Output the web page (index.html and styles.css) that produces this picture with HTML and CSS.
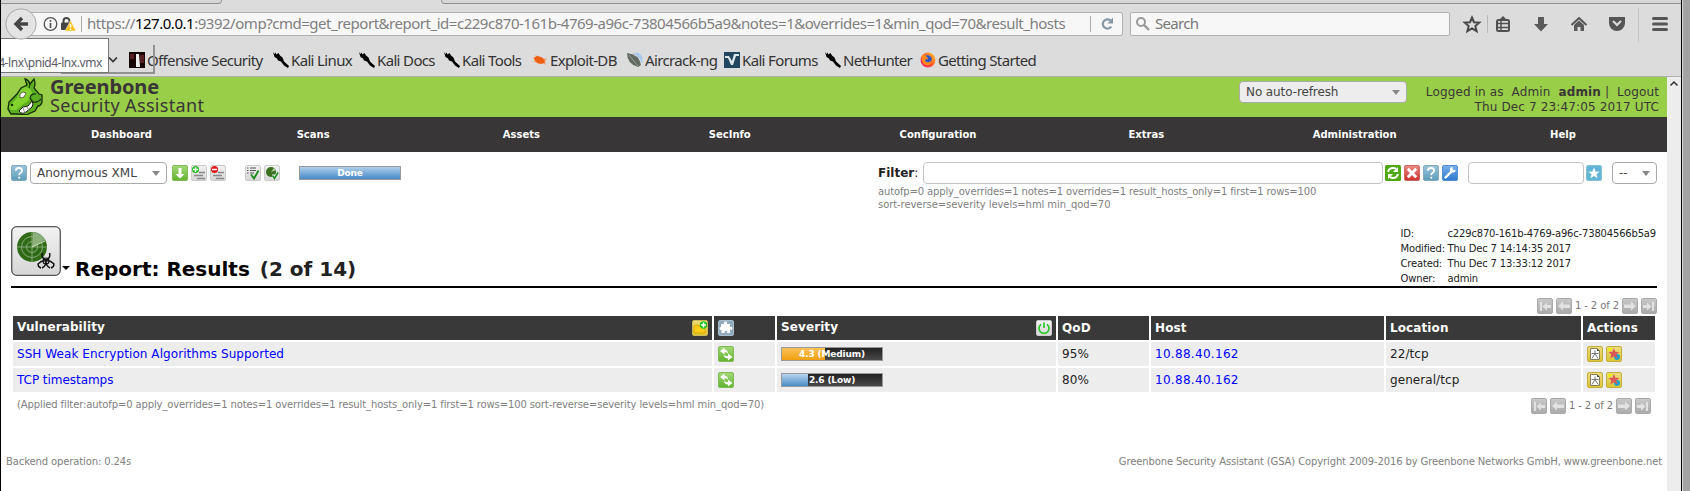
FILE: index.html
```
<!DOCTYPE html>
<html lang="en">
<head>
<meta charset="utf-8">
<title>Greenbone Security Assistant</title>
<link rel="stylesheet" href="styles.css">
</head>
<body>
<svg width="0" height="0" class="defs">
  <defs>
    <linearGradient id="gBlue" x2="0" y2="1"><stop offset="0" stop-color="#9cc6dc"/><stop offset="1" stop-color="#5c9bbb"/></linearGradient>
    <linearGradient id="gGreen" x2="0" y2="1"><stop offset="0" stop-color="#a3d977"/><stop offset="1" stop-color="#62b22f"/></linearGradient>
    <linearGradient id="gGray" x2="0" y2="1"><stop offset="0" stop-color="#f2f2f2"/><stop offset="1" stop-color="#d6d6d6"/></linearGradient>
    <linearGradient id="gPage" x2="0" y2="1"><stop offset="0" stop-color="#c9c9c9"/><stop offset="1" stop-color="#aaa"/></linearGradient>
    <linearGradient id="gRed" x2="0" y2="1"><stop offset="0" stop-color="#ec8a83"/><stop offset="1" stop-color="#c9302f"/></linearGradient>
    <linearGradient id="gWrench" x2="0" y2="1"><stop offset="0" stop-color="#7ab2e8"/><stop offset="1" stop-color="#2d78cf"/></linearGradient>
    <linearGradient id="gGold" x2="0" y2="1"><stop offset="0" stop-color="#eedc80"/><stop offset="1" stop-color="#dcc52f"/></linearGradient>
    <linearGradient id="gFox" x1="0" y1="1" x2="1" y2="0"><stop offset="0" stop-color="#f0147a"/><stop offset=".5" stop-color="#ff5a2a"/><stop offset="1" stop-color="#ffd52e"/></linearGradient>
    <symbol id="help" viewBox="0 0 16 16"><rect x=".5" y=".5" width="15" height="15" rx="1.5" fill="url(#gBlue)" stroke="#86aabd"/><path d="M4.8 5.6Q5 3 8 3t3.1 2.5Q11 7 9.400 8 8.200 8.700 8.200 10.300M8.200 11.700v1.800" fill="none" stroke="#fff" stroke-width="1.800"/></symbol>
    <symbol id="kali" viewBox="0 0 16 16"><path d="M0 0l1.500 2 1-1.500 1 2L5.500 1 7 3.500l2.500 2 1.500 4L16 14l-1 2-4-2.500-3-4L5 8.500 4 6.500 1.500 5z" fill="#000"/></symbol>
    <symbol id="first" viewBox="0 0 16 16"><rect x=".5" y=".5" width="15" height="15" rx="1.500" fill="url(#gPage)" stroke="#aaa"/><path d="M3 4h2v9H3zM5.500 8.500l4.500-4v2.500h4v3h-4v2.500z" fill="#e2e2e2"/></symbol>
    <symbol id="prev" viewBox="0 0 16 16"><rect x=".5" y=".5" width="15" height="15" rx="1.500" fill="url(#gPage)" stroke="#aaa"/><path d="M2 8l5-4.500V6.500h7v3.500H7v2.500z" fill="#e2e2e2"/></symbol>
    <symbol id="compare" viewBox="0 0 16 16"><rect x=".5" y=".5" width="15" height="15" rx="1.500" fill="url(#gGreen)" stroke="#80bb58"/><path d="M2 5l4.500-3.500v2Q10 4 10 7.500 9 6 6.500 6.300v2.200zM14.500 11L10 14.500v-2Q6 12.500 6 8.500q1 2 4 1.500V7.500z" fill="#fff"/></symbol>
    <symbol id="note" viewBox="0 0 16 16"><rect x=".5" y=".5" width="15" height="15" rx="1.500" fill="url(#gGold)" stroke="#c2ae3c"/><path d="M3.500 2.500h6.500l2.500 2.500v8.500h-9z" fill="#fff" stroke="#85805c"/><path d="M10 2.500V5h2.500z" fill="#444"/><path d="M8 4.500v3M4.500 7.500h7M8 7.500l-3 5M8 7.500l3 5" stroke="#777" fill="none"/></symbol>
    <symbol id="override" viewBox="0 0 16 16"><rect x=".5" y=".5" width="15" height="15" rx="1.500" fill="url(#gGold)" stroke="#c2ae3c"/><path d="M2 2h5l-4 4z" fill="#e8f000"/><circle cx="11" cy="11" r="3" fill="#18a4cf"/><path d="M7.800 2l1.500 3.800 4 .2-3 2.500 1.200 4-3.700-2.200-3.500 2.200 1-4L2.500 6l4-.2z" fill="#dc5757"/></symbol>
  </defs>
</svg>
<div class="window">
  <div class="chrome">
    <div class="tabs"><span class="tab-a"></span><span class="tab-b"></span></div>
    <div class="navbar">
      <span class="back"><svg width="32" height="32" viewBox="0 0 32 32"><circle cx="16" cy="16" r="15.200" fill="#e4e4e4" stroke="#aaa"/><path d="M17 10l-6 6 6 6M11.500 16H23" fill="none" stroke="#454545" stroke-width="3.400"/></svg></span>
      <div class="url">
        <svg class="info" width="34" height="16" viewBox="0 0 34 16"><circle cx="7.500" cy="8" r="6.300" fill="none" stroke="#555" stroke-width="1.300"/><path d="M7.500 7v5M7.500 4v1.700" stroke="#555" stroke-width="1.700"/><path d="M20.500 8V5a3 3 0 0 1 6 0V8" fill="none" stroke="#444" stroke-width="2"/><rect x="18" y="6.500" width="10" height="7.500" rx="1" fill="#444"/><path d="M27.500 4.500L33 15H22z" fill="#ffc119" stroke="#f6f6f6" stroke-width=".5"/><path d="M27.500 8v3.500M27.500 12.500V14" stroke="#fff" stroke-width="1.500"/></svg>
        <span class="sep"></span>
        <span class="address">https://<b>127.0.0.1</b>:9392/omp?cmd=get_report&amp;report_id=c229c870-161b-4769-a96c-73804566b5a9&amp;notes=1&amp;overrides=1&amp;min_qod=70&amp;result_hosts</span>
        <span class="sep reload-sep"></span>
        <svg width="13" height="14" viewBox="0 0 13 14"><path d="M9.500 3.500A4.600 4.600 0 1 0 10.300 9.500" fill="none" stroke="#8797a5" stroke-width="2.200"/><path d="M12 .5v6H6.500z" fill="#8797a5"/></svg>
      </div>
      <div class="search"><svg width="14" height="14" viewBox="0 0 14 14"><circle cx="5" cy="5" r="4" fill="none" stroke="#999" stroke-width="2"/><path d="M8 8l5 5" stroke="#999" stroke-width="2.400"/></svg><span>Search</span></div>
      <svg class="tools" width="215" height="36" viewBox="0 0 215 36">
        <path d="M12 11.500l2 4.700 5.300.4-4 3.500 1.300 5L12 22.300l-4.600 2.800 1.300-5-4-3.500 5.300-.4z" fill="none" stroke="#484848" stroke-width="2"/>
        <path d="M27.500 9v18" stroke="#b8b8b8"/>
        <rect x="37" y="14" width="12" height="11" rx="1.500" fill="none" stroke="#505050" stroke-width="2"/><path d="M39 14l4-4 4 4z" fill="#505050"/><path d="M38 17.500h10M38 21.500h10M41 15v10" stroke="#505050" stroke-width="1.500"/>
        <path d="M78 11h6v7h4l-7 7.500-7-7.500h4z" fill="#5a5a5a"/>
        <path d="M111.500 19l7.500-7 7.500 7" fill="none" stroke="#555" stroke-width="2"/><path d="M114 19l5-4.500 5 4.500v6h-3.500v-4h-3v4H114z" fill="#5a5a5a"/>
        <path d="M149 11h16v6a8 8 0 0 1-16 0z" fill="#555"/><path d="M153 15l4 4 4-4" fill="none" stroke="#ddd" stroke-width="2"/>
        <path d="M178.500 2v34" stroke="#c4c4c4"/>
        <path d="M193.500 12.500h13M193.500 18h13M193.500 23.500h13" stroke="#555" stroke-width="3" stroke-linecap="round"/>
      </svg>
    </div>
    <div class="bookmarks">
      <span><svg width="16" height="16" viewBox="0 0 16 16"><path d="M0 0h16v16H0z" fill="#180505"/><path d="M1 2h4v5H1zM11 3h4v8h-4z" fill="#592024"/><path d="M7 2h3l1 13H7z" fill="#eee"/></svg>Offensive Security</span>
      <span><svg width="16" height="16"><use href="#kali"/></svg>Kali Linux</span>
      <span><svg width="16" height="16"><use href="#kali"/></svg>Kali Docs</span>
      <span><svg width="16" height="16"><use href="#kali"/></svg>Kali Tools</span>
      <span><svg width="16" height="16" viewBox="0 0 16 16"><path d="M1 5l4 1L3 3l5 2 4 2 3-1-2 3 1 4-3-2-4 1-4-2-3 0 3-1z" fill="#f09a6a"/><ellipse cx="7.500" cy="8" rx="5.500" ry="3.200" transform="rotate(25 7.500 8)" fill="#ef5f10"/></svg>Exploit-DB</span>
      <span><svg width="16" height="16" viewBox="0 0 16 16"><path d="M6 1.500Q14 3 15 11M9 1q5 1 6 6" fill="none" stroke="#a6c7ee" stroke-width="1.600"/><path d="M0 1Q12 2 14 13L11 15Q0 12 0 1z" fill="#626b62"/><path d="M2 3l9 11" stroke="#999" /></svg>Aircrack-ng</span>
      <span><svg width="16" height="16" viewBox="0 0 16 16"><path d="M0 0h16v16H0z" fill="#20475e"/><path d="M1 4h4l3 5 2-7h5v2h-3l-3 9H7L4 6H1z" fill="#dce5e8"/></svg>Kali Forums</span>
      <span><svg width="16" height="16"><use href="#kali"/></svg>NetHunter</span>
      <span><svg width="16" height="16" viewBox="0 0 16 16"><circle cx="8" cy="8" r="7.500" fill="url(#gFox)"/><circle cx="7.500" cy="7.500" r="4.200" fill="#2b57c5"/><path d="M2 3q5 0 6 4-3 0-3 2 4 3 7-1-1 6-6 5Q1 12 2 3z" fill="#ff8b16"/></svg>Getting Started</span>
    </div>
    <div class="tip-shadow"></div>
    <div class="tip">4-lnx\pnid4-lnx.vmx</div>
    <svg class="chev" width="10" height="8" viewBox="0 0 10 8"><path d="M1 1.500l4 4 4-4" fill="none" stroke="#333" stroke-width="1.700"/></svg>
  </div>
  <div class="view">
    <div class="page">
      <header class="banner">
        <svg class="logo" width="36" height="38" viewBox="0 0 36 38"><path d="M20 8l-2-6q4 1 5 5l4-5q2 5 0 9l5 6 3 1v7q-1 4-4 4l-3 5-9 4-8-1-7 0-3-5 1-7 8-8 4-6z" fill="#5cae20" stroke="#142b08" stroke-width="1.300"/><path d="M18 10q8 1 7 9l-4 5-6 4-6 5-5 0-2-4 8-8q2-8 8-11z" fill="#82d22e"/><path d="M13 17l3-2 3 1-2 4-4 1z" fill="#fff" stroke="#222" stroke-width=".6"/><path d="M12 34l4-4 5-1 4-5q2 3 0 6l-6 5q-4 3-7-1z" fill="#fff" stroke="#1a1a1a"/><path d="M16 31l2 5M20 30l2 4" stroke="#777" stroke-width=".8"/><path d="M29 17q-5-1-6 4l3 4q5 1 8-3" fill="#5cae20" stroke="#14300a" stroke-width="1.200"/><path d="M22 5q2 3 0 6" fill="none" stroke="#14300a"/><circle cx="5" cy="28" r="1.300" fill="#173007"/></svg>
        <div class="brand"><strong>Greenbone</strong><span>Security Assistant</span></div>
        <div class="select refresh"><span>No auto-refresh</span><i></i></div>
        <div class="session"><div>Logged in as&nbsp; Admin&nbsp; <b>admin</b> |&nbsp; Logout</div><div>Thu Dec 7 23:47:05 2017 UTC</div></div>
      </header>
      <nav><a>Dashboard</a><a>Scans</a><a>Assets</a><a>SecInfo</a><a>Configuration</a><a>Extras</a><a>Administration</a><a>Help</a></nav>
      <div class="toolbar">
        <svg class="ic" width="16" height="16"><use href="#help"/></svg>
        <div class="select format"><span>Anonymous XML</span><i></i></div>
        <svg class="ic" width="16" height="16" viewBox="0 0 16 16"><rect x=".5" y=".5" width="15" height="15" rx="1.500" fill="url(#gGreen)" stroke="#80bb58"/><path d="M6.500 3h3v6h3L8 13.500 3.500 9h3z" fill="#fff"/></svg>
        <svg class="ic" width="16" height="16" viewBox="0 0 16 16"><rect x=".5" y=".5" width="15" height="15" rx="1.500" fill="url(#gGray)" stroke="#ccc"/><path d="M8 7.500h6M3 10.500h9M6 13.500h8" stroke="#888" stroke-width="1.400"/><circle cx="4.500" cy="4.500" r="3.500" fill="#1dbb1d"/><path d="M4.500 2v5M2 4.500h5" stroke="#fff" stroke-width="1.400"/></svg>
        <svg class="ic" width="16" height="16" viewBox="0 0 16 16"><rect x=".5" y=".5" width="15" height="15" rx="1.500" fill="url(#gGray)" stroke="#ccc"/><path d="M8 7.500h6M3 10.500h9M6 13.500h8" stroke="#888" stroke-width="1.400"/><circle cx="4.500" cy="4.500" r="3.500" fill="#e31616"/><path d="M2 4.500h5" stroke="#fff" stroke-width="1.500"/></svg>
        <svg class="ic gap" width="16" height="16" viewBox="0 0 16 16"><rect x=".5" y=".5" width="15" height="15" rx="1.500" fill="url(#gGray)" stroke="#ccc"/><path d="M2 3h1.500M5 3h6M2 5.500h1.500M5 5.500h6M2 8h1.500M5 8h4" stroke="#555" stroke-width="1.200"/><path d="M6 9.500l3 4 4.500-8" fill="none" stroke="#178a17" stroke-width="1.800"/></svg>
        <svg class="ic" width="16" height="16" viewBox="0 0 16 16"><rect x=".5" y=".5" width="15" height="15" rx="1.500" fill="url(#gGray)" stroke="#ccc"/><circle cx="7" cy="7" r="5" fill="#3a7020"/><path d="M7 7l5-2-2-2z" fill="#b9d3ac"/><path d="M8 9.500h5.500v4H8z" fill="#eee"/><path d="M8.500 10.500l2 3 3.500-6" fill="none" stroke="#178a17" stroke-width="1.500"/></svg>
        <div class="bar done"><b>Done</b></div>
        <div class="filter">
          <div class="frow"><span class="flabel"><b>Filter</b>:</span><span class="input main"></span>
            <svg class="ic" width="16" height="16" viewBox="0 0 16 16"><rect width="16" height="16" rx="1.500" fill="#51a817"/><path d="M3 7q1-4 5-4 2 0 3 1M13 9q-1 4-5 4-2 0-3-1" fill="none" stroke="#fff" stroke-width="2"/><path d="M13 2v5H8zM3 14V9h5z" fill="#fff"/></svg>
            <svg class="ic" width="16" height="16" viewBox="0 0 16 16"><rect x=".5" y=".5" width="15" height="15" rx="1.500" fill="url(#gRed)" stroke="#ce6661"/><path d="M3.800 3.800l8.400 8.400M12.200 3.800l-8.400 8.400" stroke="#fff" stroke-width="3"/></svg>
            <svg class="ic" width="16" height="16"><use href="#help"/></svg>
            <svg class="ic" width="16" height="16" viewBox="0 0 16 16"><rect x=".5" y=".5" width="15" height="15" rx="1.500" fill="url(#gWrench)" stroke="#4f8fd3"/><path d="M3.500 12.500l7-7" stroke="#fff" stroke-width="2.400" stroke-linecap="round"/><path d="M13.500 4.500a2.800 2.800 0 1 1-3-2.500v2.500l1 1z" fill="#fff"/></svg>
            <span class="input name"></span>
            <svg class="ic" width="16" height="16" viewBox="0 0 16 16"><rect x=".5" y=".5" width="15" height="15" rx="1.500" fill="#61b5d6" stroke="#8bc0d4"/><path d="M8 2.500l1.600 3.900 4 .3-3.100 2.500 1 4L8 11l-3.500 2.200 1-4L2.400 6.700l4-.3z" fill="#fff"/></svg>
            <div class="select pick"><span>--</span><i></i></div>
          </div>
          <div class="applied">autofp=0 apply_overrides=1 notes=1 overrides=1 result_hosts_only=1 first=1 rows=100<br><span>sort-reverse=severity levels=hml min_qod=70</span></div>
        </div>
      </div>
      <div class="heading">
        <svg class="report" width="50" height="50" viewBox="0 0 50 50"><rect x=".7" y=".7" width="48.600" height="48.600" rx="5" fill="url(#gGray)" stroke="#555" stroke-width="1.300"/><circle cx="21" cy="21" r="15" fill="#2f6b17"/><path d="M21 21L34 14Q30 7 22 6z" fill="#a9c69c" opacity=".75"/><g fill="none" stroke="#8fb080" stroke-width=".9"><circle cx="21" cy="21" r="10.500"/><circle cx="21" cy="21" r="5.500"/><path d="M6 21h30M21 6v30"/><path d="M21 21l13-6" stroke="#e4f0de"/></g><g fill="none" stroke="#111"><circle cx="35" cy="35" r="3" stroke-width="1.100"/><path d="M35 34q-5-2-3.500-7M35 34q5-2 3.500-7M35 35q-4-1-8 3 0 3 3 4M35 35q4-1 8 3 0 3-3 4M35 35q0 5-4 7M35 35q0 5 4 7" stroke-width="1.400"/></g></svg>
        <i class="caret"></i>
        <h1>Report: Results <span>(2 of 14)</span></h1>
        <dl><dt>ID:</dt><dd>c229c870-161b-4769-a96c-73804566b5a9</dd><dt>Modified:</dt><dd>Thu Dec 7 14:14:35 2017</dd><dt>Created:</dt><dd>Thu Dec 7 13:33:12 2017</dd><dt>Owner:</dt><dd>admin</dd></dl>
      </div>
      <div class="pager"><svg width="16" height="16"><use href="#first"/></svg><svg width="16" height="16"><use href="#prev"/></svg><span>1 - 2 of 2</span><svg class="flip" width="16" height="16"><use href="#prev"/></svg><svg class="flip" width="16" height="16"><use href="#first"/></svg></div>
      <table>
        <colgroup><col class="c1"><col class="c2"><col class="c3"><col class="c4"><col class="c5"><col class="c6"><col class="c7"></colgroup>
        <tr><th><div>Vulnerability<svg width="16" height="16" viewBox="0 0 16 16"><rect x=".5" y=".5" width="15" height="15" rx="1.500" fill="url(#gGold)" stroke="#cbb85a"/><path d="M2 13V6l1-1h3l1 1h6v7z" fill="#ffcf1a" stroke="#e0a800"/><circle cx="11.500" cy="5" r="3.700" fill="#1fc01f"/><path d="M11.500 2.500v5M9 5h5" stroke="#fff" stroke-width="1.500"/></svg></div></th>
          <th><svg width="16" height="16" viewBox="0 0 16 16"><rect x=".5" y=".5" width="15" height="15" rx="1.500" fill="#8fa9bd" stroke="#a9bccb"/><path d="M3 4h3.200Q5 1.500 7.500 1.500T8.800 4H12v3q2.500-1 2.500 1.300T12 9.500V13H9q.8-2.300-1-2.300T7 13H3.500V9.800Q1.500 10.500 1.500 8.500T3 7z" fill="#fff"/></svg></th>
          <th><div>Severity<svg width="16" height="16" viewBox="0 0 16 16"><rect x=".5" y=".5" width="15" height="15" rx="1.500" fill="url(#gGray)" stroke="#ccc"/><path d="M5 4.300a5 5 0 1 0 6 0M8 2.500V8" fill="none" stroke="#20c720" stroke-width="1.600"/></svg></div></th><th>QoD</th><th>Host</th><th>Location</th><th>Actions</th></tr>
        <tr><td><a>SSH Weak Encryption Algorithms Supported</a></td><td><svg width="16" height="16"><use href="#compare"/></svg></td><td><div class="bar medium"><i style="width:43%"></i><b>4.3 (Medium)</b></div></td><td>95%</td><td><a class="ip">10.88.40.162</a></td><td>22/tcp</td><td><svg width="16" height="16"><use href="#note"/></svg><svg class="second" width="16" height="16"><use href="#override"/></svg></td></tr>
        <tr><td><a class="short">TCP timestamps</a></td><td><svg width="16" height="16"><use href="#compare"/></svg></td><td><div class="bar low"><i style="width:26%"></i><b>2.6 (Low)</b></div></td><td>80%</td><td><a class="ip">10.88.40.162</a></td><td>general/tcp</td><td><svg width="16" height="16"><use href="#note"/></svg><svg class="second" width="16" height="16"><use href="#override"/></svg></td></tr>
      </table>
      <div class="below"><span>(Applied filter:autofp=0 apply_overrides=1 notes=1 overrides=1 result_hosts_only=1 first=1 rows=100 sort-reverse=severity levels=hml min_qod=70)</span><div class="pager"><svg width="16" height="16"><use href="#first"/></svg><svg width="16" height="16"><use href="#prev"/></svg><span>1 - 2 of 2</span><svg class="flip" width="16" height="16"><use href="#prev"/></svg><svg class="flip" width="16" height="16"><use href="#first"/></svg></div></div>
      <footer><span>Backend operation: 0.24s</span><span>Greenbone Security Assistant (GSA) Copyright 2009-2016 by Greenbone Networks GmbH, www.greenbone.net</span></footer>
    </div>
    <div class="scroll"><svg width="14" height="14" viewBox="0 0 14 14"><path d="M3.500 8.500L7 5l3.500 3.500" fill="none" stroke="#333" stroke-width="1.500"/></svg></div>
  </div>
</div>
</body>
</html>
```
FILE: styles.css
```
* { box-sizing: border-box; }
body { margin: 0; background: #a3a3a3; font: 12px "DejaVu Sans", sans-serif; color: #222; overflow: hidden; }
svg { display: block; flex: none; }
.defs { position: absolute; }
.window { width: 1683px; height: 491px; border-left: 1px solid #000; border-right: 1px solid #d8d8d8; background: #fff; box-shadow: inset -1px 0 #000; }

.chrome { position: relative; width: 1680px; height: 77px; background: #dcdcdc; border-bottom: 1px solid #b0b0b0; font: 15px "Noto Sans", sans-serif; overflow: hidden; }
.tabs { height: 4px; display: flex; justify-content: space-between; }
.tabs span { height: 4px; background: #d6d6d6; border-bottom: 1px solid #8f8f8f; }
.tab-a { width: 221px; border-bottom-right-radius: 6px; border-right: 1px solid #999; }
.tab-b { width: 1240px; border-bottom-left-radius: 6px; border-left: 1px solid #999; }
.navbar { height: 40px; display: flex; align-items: center; padding-left: 4px; }
.back { z-index: 1; }
.url { width: 1096px; height: 24px; margin-left: -10px; display: flex; align-items: center; background: #f7f7f7; border: 1px solid #b0b0b0; border-radius: 2px; padding-left: 15px; }
.info { margin-right: 4px; }
.sep { width: 1px; height: 16px; background: #aaa; margin-right: 5px; }
.address { color: #7f7f7f; letter-spacing: -.475px; line-height: 20px; margin-top: -2px; white-space: nowrap; width: 1003px; }
.address b { font-weight: 400; color: #000; }
.reload-sep { margin: 0 10px 0 0; }
.search { width: 320px; height: 24px; margin-left: 7px; display: flex; align-items: center; gap: 5px; padding-left: 5px; background: #f7f7f7; border: 1px solid #b0b0b0; border-radius: 2px; color: #777; letter-spacing: -.7px; }
.search span { margin-top: -2px; }
.tools { margin: 0 0 0 10px; }
.bookmarks { display: grid; grid-template-columns: 144px 86px 85px 88px 95px 97px 101px 95px 130px; height: 31px; padding-left: 128px; color: #333; letter-spacing: -.65px; }
.bookmarks span { display: flex; align-items: center; gap: 2px; white-space: nowrap; }
.tip, .tip-shadow, .chev { position: absolute; }
.tip-shadow { left: 60px; top: 45px; width: 94px; height: 29px; border: solid #929292; border-width: 0 2px 2px 0; }
.tip { left: -6px; top: 38px; width: 114px; height: 35px; background: #fff; border: 1px solid #777; padding: 15px 6px 0 0; font-size: 12px; line-height: 17px; letter-spacing: -.42px; color: #5a5a66; text-align: right; white-space: nowrap; direction: ltr; display: flex; justify-content: flex-end; }
.chev { left: 107px; top: 56px; }

.view { display: flex; width: 1680px; height: 414px; }
.page { width: 1666px; }
.scroll { width: 14px; background: #ededed; }
.banner { display: flex; height: 40px; background: #99ce48; color: #393637; }
.logo { margin-left: 6px; }
.brand { display: flex; flex-direction: column; margin-left: 7px; font-family: "Noto Sans", sans-serif; width: 1181px; }
.brand strong { font-size: 20px; line-height: 19px; letter-spacing: -.1px; }
.brand span { font-size: 18px; line-height: 18px; letter-spacing: .32px; }
.select { display: flex; align-items: center; justify-content: space-between; height: 22px; border: 1px solid #aaa; border-radius: 4px; background: #fff; color: #444; padding: 0 6px; }
.select i { border: 4px solid transparent; border-top: 5px solid #888; border-bottom: 0; }
.refresh { width: 168px; margin: 4px 0 0 8px; background: #ededed; letter-spacing: -.1px; }
.session { flex: 1; text-align: right; padding: 8px 8px 0 0; line-height: 15px; letter-spacing: .14px; white-space: nowrap; }
nav { display: grid; grid-template-columns: 208px repeat(7, 208.300px); height: 35px; background: #393637; color: #fff; font-size: 10px; font-weight: 700; line-height: 35px; text-align: center; }
nav a:first-child { padding-left: 33px; }

.toolbar { display: flex; height: 72px; padding: 10px 0 0 10px; }
.ic { margin-top: 3px; margin-right: 3px; }
.format { width: 137px; margin-right: 5px; }
.gap { margin-left: 16px; }
.bar { position: relative; width: 102px; height: 14px; border: 1px solid #999; background: linear-gradient(#222, #484848); color: #fff; font-size: 9px; line-height: 12px; text-align: center; letter-spacing: -.15px; }
.bar i { position: absolute; left: 0; top: 0; bottom: 0; }
.bar b { position: relative; }
.medium i { background: linear-gradient(#fbc25c, #f0a00c); }
.low i { background: linear-gradient(#b7d3ec, #4a8cc6); }
.done { margin: 4px 0 0 16px; background: linear-gradient(#b0cfeb, #4689c6); }
.filter { margin-left: 477px; }
.frow { display: flex; }
.flabel { width: 45px; line-height: 22px; color: #222; }
.input { height: 22px; border: 1px solid #c4c4c4; border-radius: 4px; }
.main { width: 460px; margin-right: 2px; }
.name { width: 116px; margin: 0 2px 0 7px; }
.pick { width: 45px; margin-left: 7px; }
.applied { margin-top: 1px; font-size: 10px; line-height: 13px; letter-spacing: -.145px; color: #808080; }
.applied span { letter-spacing: -.07px; }

.heading { display: flex; width: 1646px; height: 64px; margin-left: 10px; border-bottom: 2px solid #000; padding-top: 2px; }
.caret { margin: 40px 5px 0 1px; height: 4px; border: 4px solid transparent; border-top-color: #000; border-bottom: 0; }
.heading h1 { margin: 31px 0 0; font-size: 20px; line-height: 25px; color: #000; white-space: pre; }
.heading h1 span { color: #222; margin-left: 3px; }
dl { display: grid; grid-template-columns: 47px auto; grid-auto-rows: 15px; margin: 0 1px 0 auto; font-size: 10px; line-height: 15px; letter-spacing: -.18px; }
dd { margin: 0; }
.pager { display: flex; gap: 3px; justify-content: flex-end; height: 16px; margin: 10px 10px 0 0; font-size: 10px; line-height: 15px; letter-spacing: -.1px; color: #777; }
.flip { transform: scaleX(-1); }
table { table-layout: fixed; width: 1646px; margin-left: 10px; border-spacing: 2px; }
.c1 { width: 699px; } .c2 { width: 61px; } .c3 { width: 279px; } .c4 { width: 91px; } .c5 { width: 233px; } .c6 { width: 195px; } .c7 { width: 72px; }
th, td { height: 24px; padding: 0 4px; text-align: left; }
th { background: #393939; color: #fff; letter-spacing: .1px; }
th div { display: flex; justify-content: space-between; }
td { background: #ededed; letter-spacing: .07px; }
td svg { display: inline-block; vertical-align: middle; }
.second { margin-left: 3px; }
td a { color: #0000ff; }
.ip { letter-spacing: .3px; }
.short { letter-spacing: -.05px; }
.below { display: flex; justify-content: space-between; height: 60px; padding-left: 16px; font-size: 10px; line-height: 22px; letter-spacing: -.118px; color: #808080; }
.below .pager { margin: 4px 16px 0 0; }
footer { display: flex; justify-content: space-between; padding: 0 5px; font-size: 10px; line-height: 15px; letter-spacing: -.12px; color: #808080; }
```
